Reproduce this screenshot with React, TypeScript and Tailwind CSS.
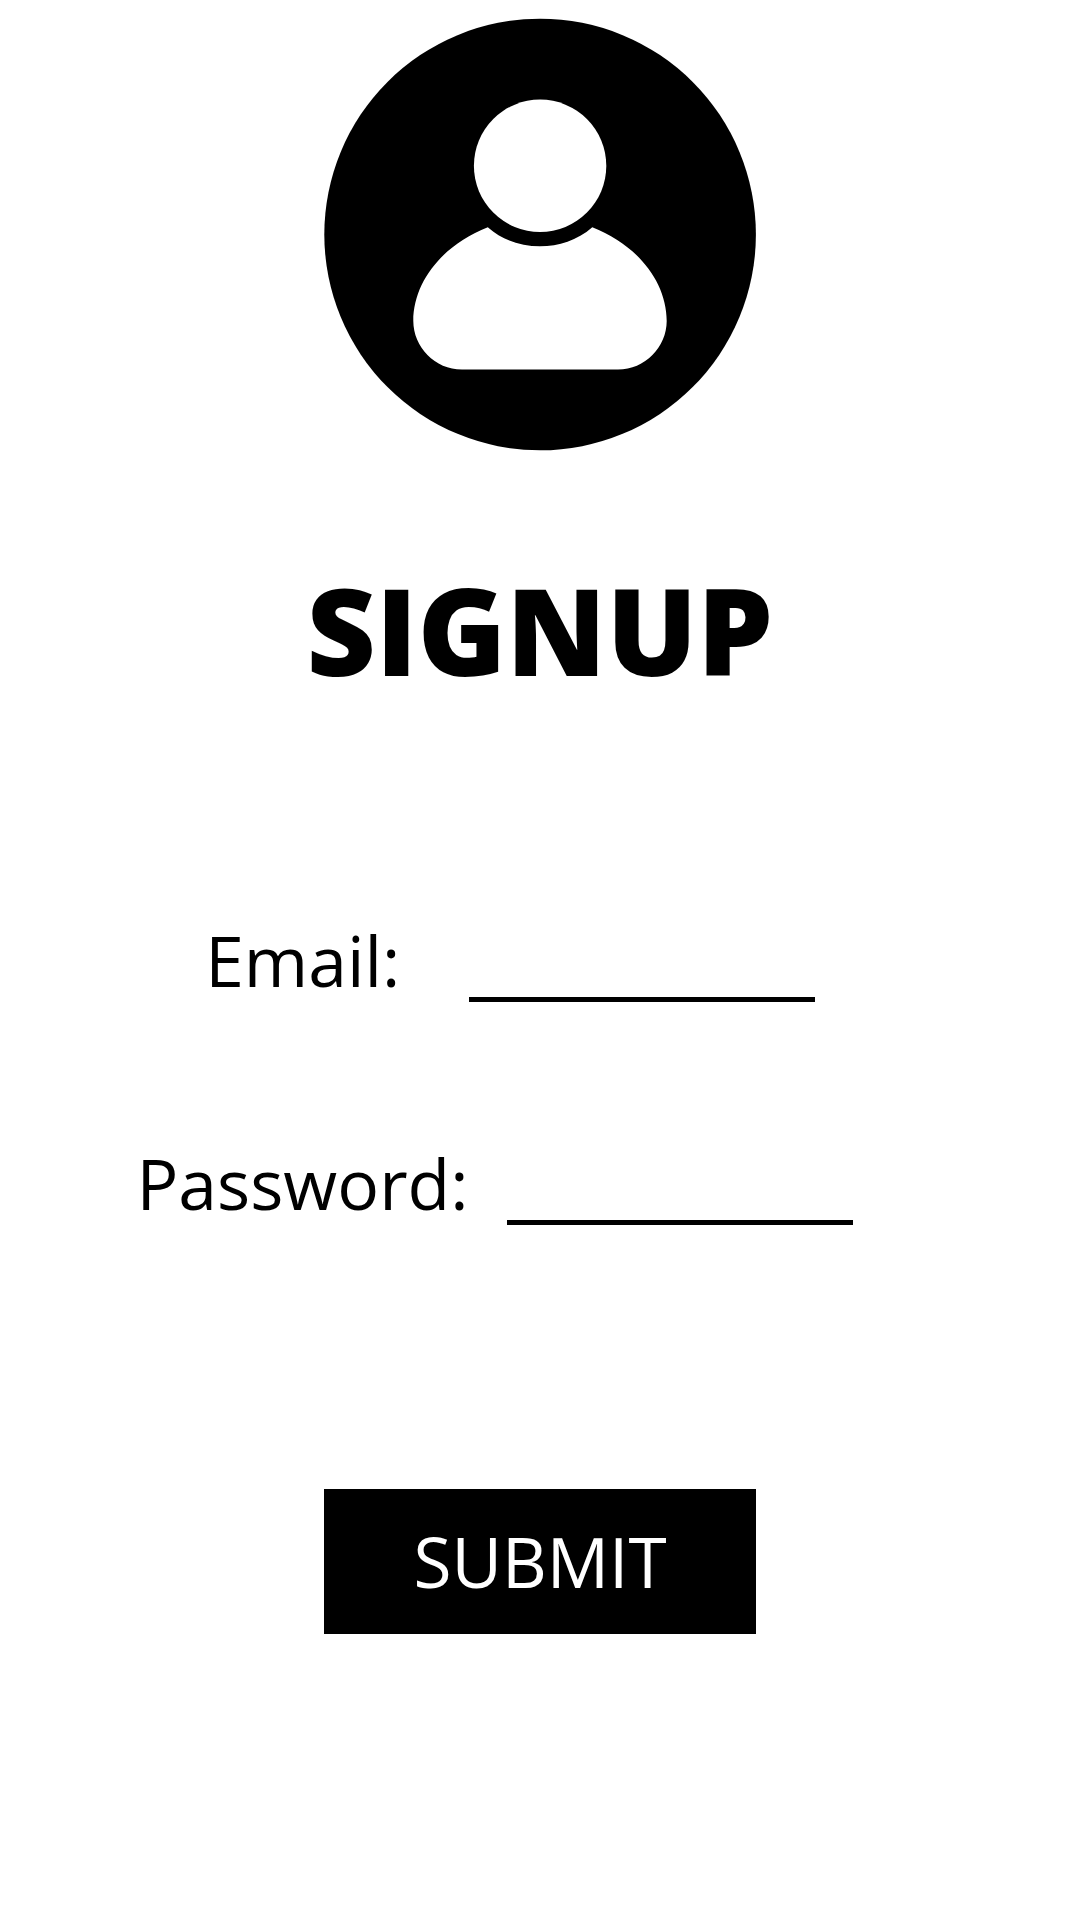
export default function App() {
  return (
    <main className="flex h-[1920px] w-[1080px] flex-col overflow-hidden bg-white font-['Open_Sans',sans-serif] text-black">
      <svg className="mt-[18px] ml-[324px] size-[433px] shrink-0" viewBox="324 18 433 433" aria-hidden="true">
        <circle cx="540.1" cy="234.5" r="215.8" />
        <circle cx="540.1" cy="165.8" r="66.2" fill="white" />
        <path
          d="M487.800 227.200 C503 240.500 521 246.200 540 246.200 C559 246.200 577 240.500 592.300 227.200 C636 244 666.700 281 666.700 321 C666.700 347 645 369.600 618 369.600 H462 C435 369.600 413.300 347 413.300 321 C413.300 281 444 244 487.800 227.200 Z"
          fill="white"
        />
      </svg>
      <h1 className="mt-[97px] ml-[306.5px] h-[164px] text-[120px] leading-[164px] font-extrabold whitespace-nowrap">SIGNUP</h1>
      <form className="mt-[201px]" onSubmit={(e) => e.preventDefault()}>
        <div className="flex h-[96px] items-start pl-[205.2px]">
          <label htmlFor="email" className="w-[263.4px] text-[69.6px] leading-[95px]">Email:</label>
          <input id="email" className="mt-[19px] h-[70px] w-[346px] border-b-5 border-black outline-none" />
        </div>
        <div className="mt-[127px] flex h-[96px] items-start pl-[136.5px]">
          <label htmlFor="password" className="w-[370px] text-[69.6px] leading-[95px]">Password:</label>
          <input id="password" type="password" className="mt-[19px] h-[70px] w-[346px] border-b-5 border-black outline-none" />
        </div>
        <button className="mt-[257px] ml-[324.4px] h-[145px] w-[431.3px] bg-black text-[69.33px] text-white">SUBMIT</button>
      </form>
    </main>
  );
}
